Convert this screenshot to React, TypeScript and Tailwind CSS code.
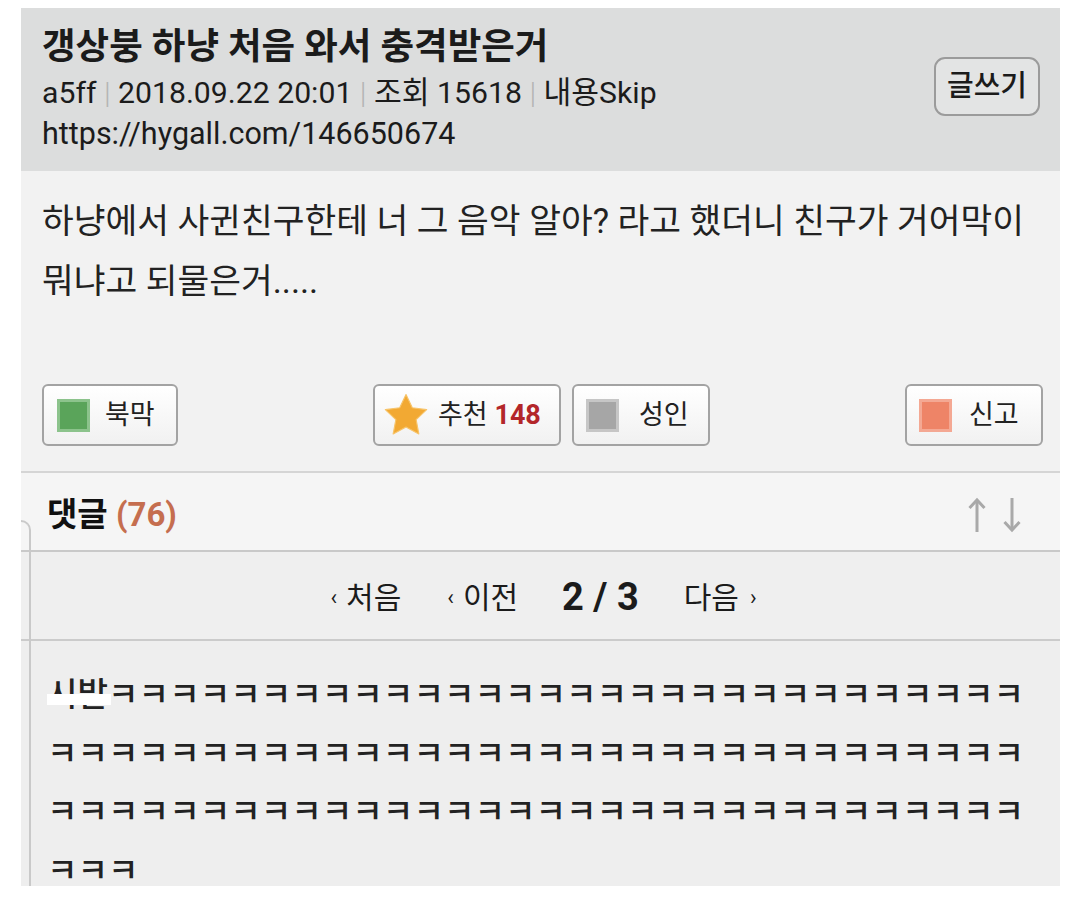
import { Fragment } from 'react';

const font = { fontFamily: 'Roboto, "Noto Sans CJK KR", sans-serif' };

const KK = 'ㅋ';

function Square({ color, edge }: { color: string; edge: string }) {
  return (
    <span className={`w-[33px] h-[33px] border-[3px] flex-shrink-0 ${color} ${edge}`} />
  );
}

function Star() {
  return (
    <svg width="46" height="44" viewBox="0 0 24 23" className="flex-shrink-0">
      <path
        d="M12 0.8l3.3 6.9 7.5 1-5.5 5.2 1.4 7.5L12 17.8l-6.7 3.6 1.4-7.5L1.2 8.7l7.5-1z"
        fill="#f2a933"
        stroke="#f7c46a"
        strokeWidth="0.6"
        strokeLinejoin="round"
      />
    </svg>
  );
}

function ArrowsUpDown() {
  return (
    <svg width="54" height="36" viewBox="0 0 54 36" className="text-[#a9a9a9]">
      <g stroke="currentColor" strokeWidth="3" fill="none" strokeLinecap="butt">
        <path d="M9 3v32" />
        <path d="M1.5 11L9 3l7.5 8" strokeLinejoin="miter" />
        <path d="M44 1v32" />
        <path d="M36.5 25l7.5 8 7.5-8" strokeLinejoin="miter" />
      </g>
    </svg>
  );
}

function Sep() {
  return <span className="text-[#b4b4b4] font-light">|</span>;
}

const lines = [
  { lead: '시발', count: 30 },
  { lead: '', count: 32 },
  { lead: '', count: 32 },
  { lead: '', count: 3 },
];

export default function App() {
  return (
    <div className="min-h-[902px] bg-white pt-[8px] pl-[21px] pr-[20px]" style={font}>
      <div className="relative w-[1039px]">
        {/* post header */}
        <div className="h-[163px] bg-[#dcdddd] pl-[21px] pr-[20px] pt-[14px] flex items-start justify-between">
          <div className="text-[#1b1b1b]">
            <h1 className="text-[36.5px] font-bold leading-[50px]">갱상붕 하냥 처음 와서 충격받은거</h1>
            <p className="text-[30.2px] leading-[41px]">
              a5ff <Sep /> 2018.09.22 20:01 <Sep /> 조회 15618 <Sep /> 내용Skip
            </p>
            <p className="text-[30.5px] leading-[41px]">https://hygall.com/146650674</p>
          </div>
          <button className="mt-[35px] w-[106px] h-[59px] rounded-[11px] border-2 border-[#9b9b9b] bg-[#e3e4e4] text-[29px] font-medium text-[#1b1b1b] leading-none">
            글쓰기
          </button>
        </div>

        {/* post body */}
        <div className="bg-[#f2f2f2] pt-[20px] pl-[21px] pr-[17px] pb-[25px] border-b-2 border-[#d5d5d5]">
          <p className="text-[34.5px] leading-[60px] text-[#222]">
            하냥에서 사귄친구한테 너 그 음악 알아? 라고 했더니 친구가 거어막이
            <br />
            뭐냐고 되물은거.....
          </p>
          <div className="mt-[73px] flex items-center justify-between">
            <button className="w-[136px] h-[62px] rounded-[6px] border-2 border-[#a3a3a3] bg-gradient-to-b from-white to-[#f1f1f1] flex items-center pl-[13px] gap-[15px] text-[27px] text-[#222]">
              <Square color="bg-[#5aa45a]" edge="border-[#8cc38c]" />
              북막
            </button>
            <div className="flex items-center gap-[11px]">
              <button className="w-[188px] h-[62px] rounded-[6px] border-2 border-[#a3a3a3] bg-gradient-to-b from-white to-[#f1f1f1] flex items-center pl-[8px] gap-[9px] text-[27px] text-[#222]">
                <Star />
                <span>
                  추천 <span className="font-bold text-[#b3262a]">148</span>
                </span>
              </button>
              <button className="w-[138px] h-[62px] rounded-[6px] border-2 border-[#a3a3a3] bg-gradient-to-b from-white to-[#f1f1f1] flex items-center pl-[12px] gap-[20px] text-[27px] text-[#222]">
                <Square color="bg-[#a6a6a6]" edge="border-[#c6c6c6]" />
                성인
              </button>
            </div>
            <button className="w-[138px] h-[62px] rounded-[6px] border-2 border-[#a3a3a3] bg-gradient-to-b from-white to-[#f1f1f1] flex items-center pl-[12px] gap-[17px] text-[27px] text-[#222]">
              <Square color="bg-[#ee8467]" edge="border-[#f4a893]" />
              신고
            </button>
          </div>
        </div>

        {/* comments header */}
        <div className="h-[79px] bg-[#f5f5f5] pl-[26px] pr-[38px] pt-[6px] flex items-center justify-between border-b-2 border-[#c9c9c9]">
          <h2 className="text-[33px] font-bold text-[#111]">
            댓글 <span className="text-[#c56e4f]">(76)</span>
          </h2>
          <ArrowsUpDown />
        </div>

        {/* pagination */}
        <div className="h-[89px] bg-[#efefef] border-b-2 border-[#cbcbcb] pt-[4px] flex items-center justify-center text-[30px] text-[#1b1b1b]">
          <div className="flex items-center ml-[6px]">
            <span className="flex items-center gap-[9px]">
              <span className="text-[22px]">‹</span>처음
            </span>
            <span className="flex items-center gap-[9px] ml-[46px]">
              <span className="text-[22px]">‹</span>이전
            </span>
            <span className="ml-[44px] text-[38px] font-bold">2 / 3</span>
            <span className="flex items-center gap-[11px] ml-[45px]">
              다음<span className="text-[22px]">›</span>
            </span>
          </div>
        </div>

        {/* comment text */}
        <div className="h-[245px] bg-[#eeeeee] pl-[26px] pt-[25px]">
          <div className="relative text-[33.2px] font-medium leading-[58.5px] text-[#222] whitespace-nowrap">
            {lines.map((l, i) => (
              <Fragment key={i}>
                {l.lead}
                {KK.repeat(l.count)}
                {i < lines.length - 1 && <br />}
              </Fragment>
            ))}
            <span className="absolute left-0 top-[28px] w-[64px] h-[11px] bg-white" />
          </div>
        </div>

        {/* left rail of the comment list */}
        <span className="absolute left-0 top-[512px] bottom-0 w-[10px] border-t-2 border-r-2 border-[#c9c9c9] rounded-tr-[12px]" />
      </div>
    </div>
  );
}
